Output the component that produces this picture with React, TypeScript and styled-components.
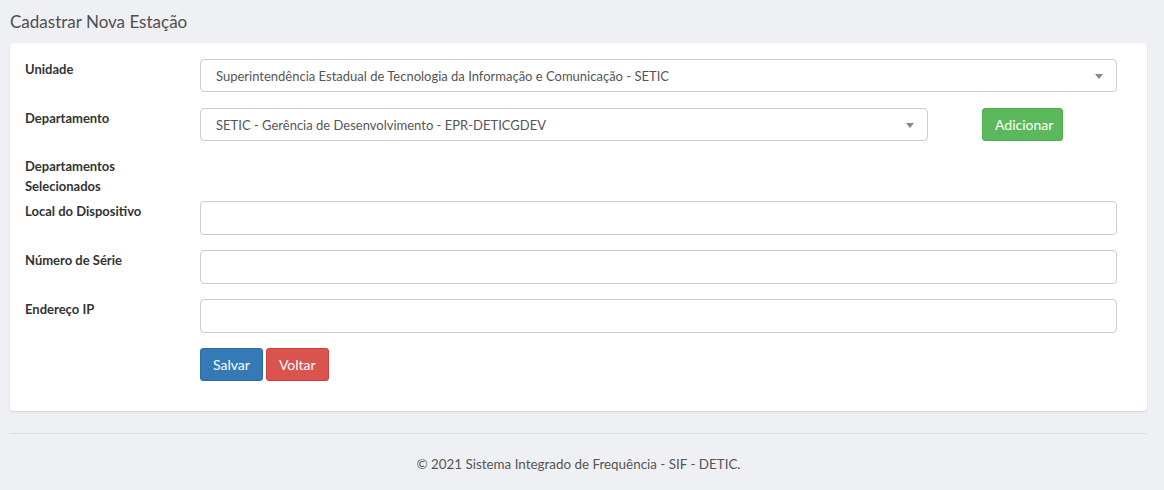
import styled, { createGlobalStyle } from 'styled-components'

const GlobalStyle = createGlobalStyle`
  body {
    margin: 0;
    background: #eef0f4;
    font-family: Lato, "Liberation Sans", sans-serif;
    font-size: 13px;
    color: #333;
  }
`

const Page = styled.div`
  padding: 0 17px 0 10px;
  height: 490px;
  box-sizing: border-box;
`

const Title = styled.h3`
  margin: 0;
  padding: 10px 0 9px;
  font-size: 17px;
  line-height: 24px;
  font-weight: 400;
  color: #4f4f4f;
`

const Card = styled.div`
  background: #fff;
  border-radius: 4px;
  box-shadow: 0 1px 2px rgba(0, 0, 0, 0.12);
  padding: 16px 30px 30px 15px;
`

const Row = styled.div<{ $gap?: number }>`
  display: grid;
  grid-template-columns: 175px 1fr;
  align-items: start;
  margin-bottom: ${p => p.$gap ?? 15}px;
`

const Label = styled.label`
  font-weight: 700;
  line-height: 20px;
  color: #333;
`

const Field = styled.div`
  display: flex;
  align-items: center;
`

const Select = styled.div<{ $width?: string }>`
  position: relative;
  box-sizing: border-box;
  width: ${p => p.$width ?? '100%'};
  height: 33px;
  border: 1px solid #ccc;
  border-radius: 4px;
  padding: 0 30px 0 15px;
  display: flex;
  align-items: center;
  color: #555;
  white-space: nowrap;

  &::after {
    content: '';
    position: absolute;
    right: 13px;
    top: 14px;
    border-left: 4px solid transparent;
    border-right: 4px solid transparent;
    border-top: 5px solid #888;
  }
`

const Input = styled.input`
  box-sizing: border-box;
  width: 100%;
  height: 34px;
  border: 1px solid #ccc;
  border-radius: 4px;
  padding: 6px 12px;
  font: inherit;
`

const Button = styled.button<{ $tone: 'green' | 'blue' | 'red' }>`
  height: 33px;
  padding: 0 12px;
  border-radius: 3px;
  font: inherit;
  font-size: 14px;
  color: #fff;
  cursor: pointer;
  background: ${p => ({ green: '#5cb85c', blue: '#337ab7', red: '#d9534f' })[p.$tone]};
  border: 1px solid ${p => ({ green: '#4cae4c', blue: '#2e6da4', red: '#d43f3a' })[p.$tone]};
`

const AddButton = styled(Button)`
  margin-left: 54px;
  width: 81px;
`

const Actions = styled.div`
  display: flex;
  gap: 3px;
`

const Footer = styled.footer`
  margin-top: 22px;
  border-top: 1px solid #dcdde1;
  padding-top: 22px;
  text-align: center;
  color: #555;
  font-size: 13.4px;
`

export default function App() {
  return (
    <Page>
      <GlobalStyle />
      <Title>Cadastrar Nova Estação</Title>
      <Card>
        <Row $gap={16}>
          <Label>Unidade</Label>
          <Select>Superintendência Estadual de Tecnologia da Informação e Comunicação - SETIC</Select>
        </Row>
        <Row>
          <Label>Departamento</Label>
          <Field>
            <Select $width="728px">SETIC - Gerência de Desenvolvimento - EPR-DETICGDEV</Select>
            <AddButton $tone="green">Adicionar</AddButton>
          </Field>
        </Row>
        <Row $gap={5}>
          <Label>Departamentos<br />Selecionados</Label>
        </Row>
        <Row>
          <Label>Local do Dispositivo</Label>
          <Input />
        </Row>
        <Row>
          <Label>Número de Série</Label>
          <Input />
        </Row>
        <Row>
          <Label>Endereço IP</Label>
          <Input />
        </Row>
        <Row $gap={0}>
          <span />
          <Actions>
            <Button $tone="blue">Salvar</Button>
            <Button $tone="red">Voltar</Button>
          </Actions>
        </Row>
      </Card>
      <Footer>© 2021 Sistema Integrado de Frequência - SIF - DETIC.</Footer>
    </Page>
  )
}
